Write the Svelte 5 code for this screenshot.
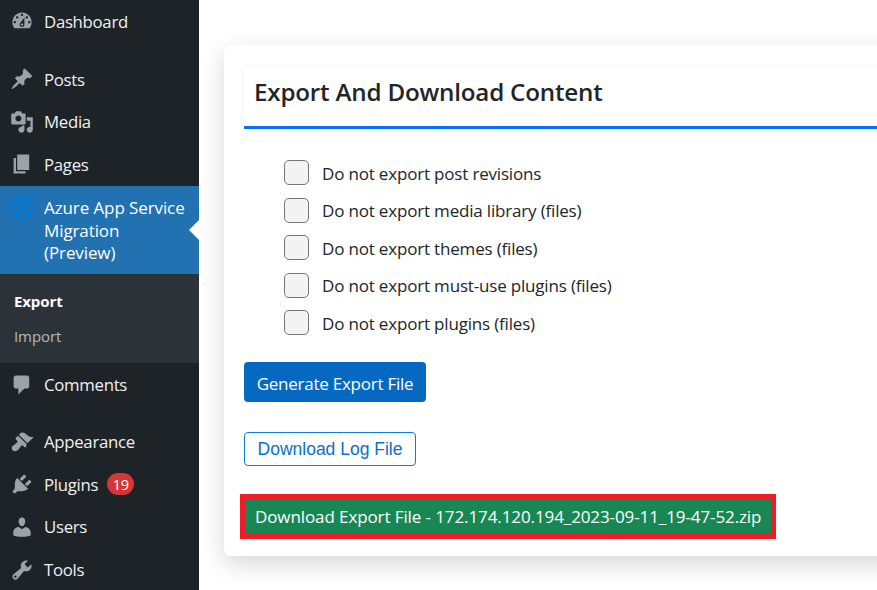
<script>
  const icons = {
    dashboard: 'M3.76 16h12.48c1.1-1.37 1.76-3.11 1.76-5 0-4.42-3.58-8-8-8s-8 3.58-8 8c0 1.89.66 3.63 1.76 5zM10 4c.55 0 1 .45 1 1s-.45 1-1 1-1-.45-1-1 .45-1 1-1zM6 6c.55 0 1 .45 1 1s-.45 1-1 1-1-.45-1-1 .45-1 1-1zm8 0c.55 0 1 .45 1 1s-.45 1-1 1-1-.45-1-1 .45-1 1-1zm-5.37 5.55L12 7v6c0 1.1-.9 2-2 2s-2-.9-2-2c0-.57.24-1.08.63-1.45zM4 10c.55 0 1 .45 1 1s-.45 1-1 1-1-.45-1-1 .45-1 1-1zm12 0c.55 0 1 .45 1 1s-.45 1-1 1-1-.45-1-1 .45-1 1-1zm-5 3c0-.55-.45-1-1-1s-1 .45-1 1 .45 1 1 1 1-.45 1-1z',
    post: 'M10.44 3.02l1.82-1.82 6.36 6.35-1.83 1.82c-1.05-.68-2.48-.57-3.41.36l-.75.75c-.92.93-1.04 2.35-.35 3.41l-1.83 1.82-2.41-2.41-2.8 2.79c-.42.42-3.38 2.71-3.8 2.29s1.86-3.39 2.28-3.81l2.79-2.79L4.1 9.36l1.83-1.82c1.05.69 2.48.57 3.4-.36l.75-.75c.93-.92 1.05-2.35.36-3.41z',
    media: 'M13 11V4c0-.55-.45-1-1-1h-1.67L9 1H5L3.67 3H2c-.55 0-1 .45-1 1v7c0 .55.45 1 1 1h10c.55 0 1-.45 1-1zM7 4.5c1.38 0 2.5 1.12 2.5 2.5S8.38 9.5 7 9.5 4.5 8.38 4.5 7 5.62 4.5 7 4.5zM14 6h5v10.5c0 1.38-1.12 2.5-2.5 2.5S14 17.88 14 16.5s1.12-2.5 2.5-2.5c.17 0 .34.02.5.05V9h-3V6zm-4 8.05V13h2v3.5c0 1.38-1.12 2.5-2.5 2.5S7 17.88 7 16.5 8.12 14 9.5 14c.17 0 .34.02.5.05z',
    page: 'M6 15V2h10v13H6zm-1 1h8v2H3V5h2v11z',
    comments: 'M5 2h9c1.1 0 2 .9 2 2v7c0 1.1-.9 2-2 2h-2l-5 5v-5H5c-1.1 0-2-.9-2-2V4c0-1.1.9-2 2-2z',
    appearance: 'M14.48 11.06L7.41 3.99l1.5-1.5c.5-.56 2.3-.47 3.51.32 1.21.8 1.43 1.28 2.91 2.1 1.18.64 2.45 1.26 4.45.85zm-.71.71L6.7 4.7 4.93 6.47c-.39.39-.39 1.02 0 1.41l1.06 1.06c.39.39.39 1.03 0 1.42-.6.6-1.43 1.11-2.21 1.69-.35.26-.7.53-1.01.84C1.43 13.23.99 15.46 2.2 16.8c1.2 1.34 3.39.94 4.72-.38.32-.31.59-.66.85-1.01.57-.79 1.08-1.62 1.69-2.21.39-.39 1.02-.39 1.41 0l1.06 1.06c.39.39 1.02.39 1.41 0z',
    plugins: 'M13.11 4.36L9.87 7.6 8 5.73l3.24-3.24c.35-.34 1.05-.2 1.56.32.52.51.66 1.21.31 1.55zm-8 1.77l.91-1.12 9.01 9.01-1.19.84c-.71.71-2.63 1.16-3.82 1.16H6.14L4.9 17.26c-.59.59-1.54.59-2.12 0-.59-.58-.59-1.53 0-2.12l1.24-1.24v-3.88c0-1.13.4-3.19 1.09-3.89zm7.26 3.97l3.24-3.24c.34-.35 1.04-.21 1.55.31.52.51.66 1.21.31 1.55l-3.24 3.25z',
    users: 'M10 9.25c-2.27 0-2.73-3.44-2.73-3.44C7 4.02 7.82 2 9.97 2c2.16 0 2.98 2.02 2.71 3.81 0 0-.41 3.44-2.68 3.44zm0 2.57L12.72 10c2.39 0 4.52 2.33 4.52 4.53v2.49s-3.65 1.13-7.24 1.13c-3.65 0-7.24-1.13-7.24-1.13v-2.49c0-2.25 1.94-4.48 4.47-4.48z',
    tools: 'M16.68 9.77c-1.34 1.34-3.3 1.67-4.95.99l-5.41 6.52c-.99.99-2.59.99-3.58 0s-.99-2.59 0-3.57l6.52-5.42c-.68-1.65-.35-3.61.99-4.95 1.28-1.28 3.12-1.62 4.72-1.06l-2.89 2.89 2.82 2.82 2.86-2.87c.53 1.58.18 3.39-1.08 4.65zM3.81 16.21c.4.39 1.04.39 1.43 0 .4-.4.4-1.04 0-1.43-.39-.4-1.03-.4-1.43 0-.39.39-.39 1.03 0 1.43z'
  }

  const topItems = [{ label: 'Dashboard', icon: 'dashboard' }]
  const contentItems = [
    { label: 'Posts', icon: 'post' },
    { label: 'Media', icon: 'media' },
    { label: 'Pages', icon: 'page' }
  ]
  const adminItems = [
    { label: 'Appearance', icon: 'appearance' },
    { label: 'Plugins', icon: 'plugins', badge: 19 },
    { label: 'Users', icon: 'users' },
    { label: 'Tools', icon: 'tools' }
  ]
  const options = [
    'Do not export post revisions',
    'Do not export media library (files)',
    'Do not export themes (files)',
    'Do not export must-use plugins (files)',
    'Do not export plugins (files)'
  ]
</script>

{#snippet menuItem(item)}
  <a class="item" href="#top">
    <svg class="icon" viewBox="0 0 20 20" aria-hidden="true">
      <path d={icons[item.icon]} fill-rule="evenodd" />
    </svg>
    <span>{item.label}</span>
    {#if item.badge}<span class="badge">{item.badge}</span>{/if}
  </a>
{/snippet}

<div class="page">
  <nav class="sidebar">
    <div class="group first">
      {#each topItems as item}{@render menuItem(item)}{/each}
    </div>
    <div class="group">
      {#each contentItems as item}{@render menuItem(item)}{/each}
    </div>
    <a class="current" href="#top">
      <svg class="azure" viewBox="0 0 24 24" aria-hidden="true">
        <circle cx="12" cy="12" r="11" fill="none" stroke="#0078d4" stroke-width="2.2" />
        <path d="M3 8c5-1 8 1 10 5s5 6 8 5M14 1.5C10 5 9 9 9.500 12S8 19 5 20M22 8c-3 0-6 1-8.500 4" fill="none" stroke="#0078d4" stroke-width="2.6" />
        <circle cx="12" cy="12" r="3.500" fill="#0078d4" />
      </svg>
      <span class="current-label">Azure App Service Migration (Preview)</span>
      <i class="arrow"></i>
    </a>
    <div class="submenu">
      <a class="sub active" href="#top">Export</a>
      <a class="sub" href="#top">Import</a>
    </div>
    {@render menuItem({ label: 'Comments', icon: 'comments' })}
    <div class="group last">
      {#each adminItems as item}{@render menuItem(item)}{/each}
    </div>
  </nav>

  <main class="main">
    <section class="card">
      <header class="card-head">
        <h1>Export And Download Content</h1>
      </header>
      <ul class="options">
        {#each options as label}
          <li>
            <label>
              <input type="checkbox" />
              <span>{label}</span>
            </label>
          </li>
        {/each}
      </ul>
      <button class="generate" type="button">Generate Export File</button>
      <button class="log" type="button">Download Log File</button>
      <div class="highlight">
        <a class="download" href="#top">Download Export File - 172.174.120.194_2023-09-11_19-47-52.zip</a>
      </div>
    </section>
  </main>
</div>

<style>
  :global(body) {
    margin: 0;
    background: #fff;
    overflow: hidden;
  }

  .page {
    display: flex;
    width: 877px;
    height: 590px;
    overflow: hidden;
    font-family: 'Open Sans', 'Noto Sans', sans-serif;
  }

  .sidebar {
    flex: 0 0 199px;
    height: 590px;
    background: #1d2327;
    padding-top: 0.2px;
    box-sizing: border-box;
  }

  a {
    text-decoration: none;
  }

  .group {
    padding-top: 15px;
  }

  .group.first {
    padding-top: 0;
  }

  .group.last {
    padding-top: 14.4px;
  }

  .item {
    display: flex;
    align-items: center;
    height: 42.6px;
    padding-left: 10px;
    color: #f0f0f1;
    font-size: 16.8px;
    letter-spacing: -0.3px;
  }

  .icon {
    flex: 0 0 24px;
    width: 24px;
    height: 24px;
    margin-right: 10px;
    fill: #9ca2a7;
  }

  .badge {
    display: inline-flex;
    align-items: center;
    justify-content: center;
    width: 27px;
    height: 22px;
    margin-left: 9px;
    border-radius: 11px;
    background: #d63638;
    color: #fff;
    font-size: 14.5px;
    letter-spacing: -0.3px;
  }

  .current {
    position: relative;
    display: flex;
    align-items: flex-start;
    box-sizing: border-box;
    height: 88px;
    padding: 9px 10px 0 9px;
    background: #2271b1;
    color: #fff;
    font-size: 17px;
    line-height: 22.6px;
    letter-spacing: -0.1px;
  }

  .current-label {
    padding-top: 2.5px;
  }

  .azure {
    flex: 0 0 24px;
    width: 24px;
    height: 24px;
    margin: 0 11px 0 0;
  }

  .arrow {
    position: absolute;
    right: 0;
    top: 34px;
    border: 10px solid transparent;
    border-right-color: #fff;
    border-left-width: 0;
  }

  .submenu {
    display: flex;
    flex-direction: column;
    height: 89.9px;
    box-sizing: border-box;
    padding-top: 10px;
    background: #2c3338;
  }

  .sub {
    height: 35px;
    line-height: 35px;
    padding-left: 14px;
    color: #b4b9be;
    font-size: 15px;
    letter-spacing: -0.1px;
  }

  .active {
    color: #fff;
    font-weight: 700;
  }

  .main {
    flex: 1;
    min-width: 0;
    padding: 45px 0 0 25px;
  }

  .card {
    width: 800px;
    height: 511px;
    box-sizing: border-box;
    padding: 21px 20px 0;
    border-radius: 7px;
    background: #fff;
    box-shadow: 0 8px 24px rgba(0, 0, 0, 0.16);
  }

  .card-head {
    box-sizing: border-box;
    height: 63px;
    padding: 0 10px 9px;
    border-bottom: 3px solid #0d6efd;
    box-shadow: 0 1px 6px rgba(0, 0, 0, 0.07);
    display: flex;
    align-items: center;
  }

  h1 {
    margin: 0;
    color: #212529;
    font-size: 24.2px;
    font-weight: 600;
    letter-spacing: -0.2px;
  }

  .options {
    list-style: none;
    margin: 0;
    padding: 31px 0 0 40px;
  }

  .options li {
    height: 37.500px;
  }

  .options label {
    display: flex;
    align-items: center;
    gap: 13px;
    height: 25px;
    color: #212529;
    font-size: 17px;
    letter-spacing: -0.18px;
  }

  .options span {
    padding-top: 1px;
  }

  .options input {
    appearance: none;
    flex: 0 0 25px;
    width: 25px;
    height: 25px;
    margin: 0;
    border: 1px solid #767676;
    border-radius: 5px;
    background: #f3f3f3;
  }

  button {
    display: block;
    font-family: inherit;
    cursor: pointer;
  }

  .generate {
    width: 182px;
    height: 40px;
    margin-top: 14px;
    padding: 3px 0 0;
    border: 0;
    border-radius: 4px;
    background: #0569c2;
    color: #fff;
    font-size: 17px;
    letter-spacing: -0.25px;
  }

  .log {
    width: 172px;
    height: 34px;
    margin-top: 30px;
    padding: 2px 0 0;
    border: 1px solid #0a7cd9;
    border-radius: 4px;
    background: #fff;
    color: #0a6fcb;
    font-family: 'Liberation Sans', Arial, sans-serif;
    font-size: 17.5px;
  }

  .highlight {
    width: fit-content;
    margin: 28px 0 0 -4px;
    border: 5px solid #ee1c25;
  }

  .download {
    display: block;
    height: 35px;
    line-height: 35px;
    padding: 0 10px;
    background: #198754;
    color: #fff;
    font-size: 17px;
    letter-spacing: -0.1px;
    white-space: nowrap;
  }
</style>
